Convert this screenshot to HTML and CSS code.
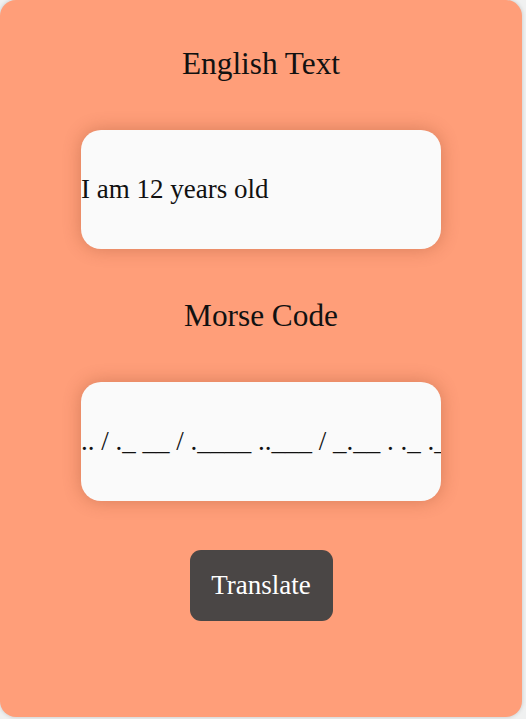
FILE: index.html
```html
<!DOCTYPE html>
<html lang="en">
<head>
<meta charset="utf-8">
<title>Morse Translator</title>
<link rel="stylesheet" href="styles.css">
</head>
<body>
<main class="card">
  <h2 class="title">English Text</h2>
  <div class="field"><span class="field-text">I am 12 years old</span></div>
  <h2 class="title">Morse Code</h2>
  <div class="field"><span class="field-text">.. / ._ __ / .____ ..___ / _.__ . ._ ._. ... / ___ ._.. _..</span></div>
  <button class="btn" type="button">Translate</button>
</main>
</body>
</html>
```

FILE: styles.css
```css
html, body {
  margin: 0;
  padding: 0;
}
body {
  background: #f0f1f1;
  font-family: "Liberation Serif", "Times New Roman", serif;
  width: 526px;
  height: 719px;
  overflow: hidden;
}
.card {
  box-sizing: border-box;
  width: 522px;
  height: 717px;
  background: #ff9e79;
  border-radius: 16px;
  box-shadow: 0 0 4px rgba(0, 0, 0, 0.18);
  display: flex;
  flex-direction: column;
  align-items: center;
  padding-top: 47px;
}
.title {
  margin: 0;
  font-weight: normal;
  font-size: 31.3px;
  line-height: 34px;
  color: #111;
}
.field {
  box-sizing: border-box;
  width: 360px;
  height: 119px;
  margin: 49px 0 50px;
  background: #fafafa;
  border-radius: 20px;
  box-shadow: 0 0 18px rgba(120, 50, 20, 0.3);
  display: flex;
  align-items: center;
  overflow: hidden;
  white-space: nowrap;
}
.field:last-of-type {
  margin-bottom: 49px;
}
.field-text {
  font-size: 27px;
  color: #111;
}
.btn {
  width: 143px;
  height: 71px;
  border: none;
  border-radius: 11px;
  background: #4a4645;
  color: #fff;
  font-family: "Liberation Serif", "Times New Roman", serif;
  font-size: 27px;
  padding: 0;
}
```
